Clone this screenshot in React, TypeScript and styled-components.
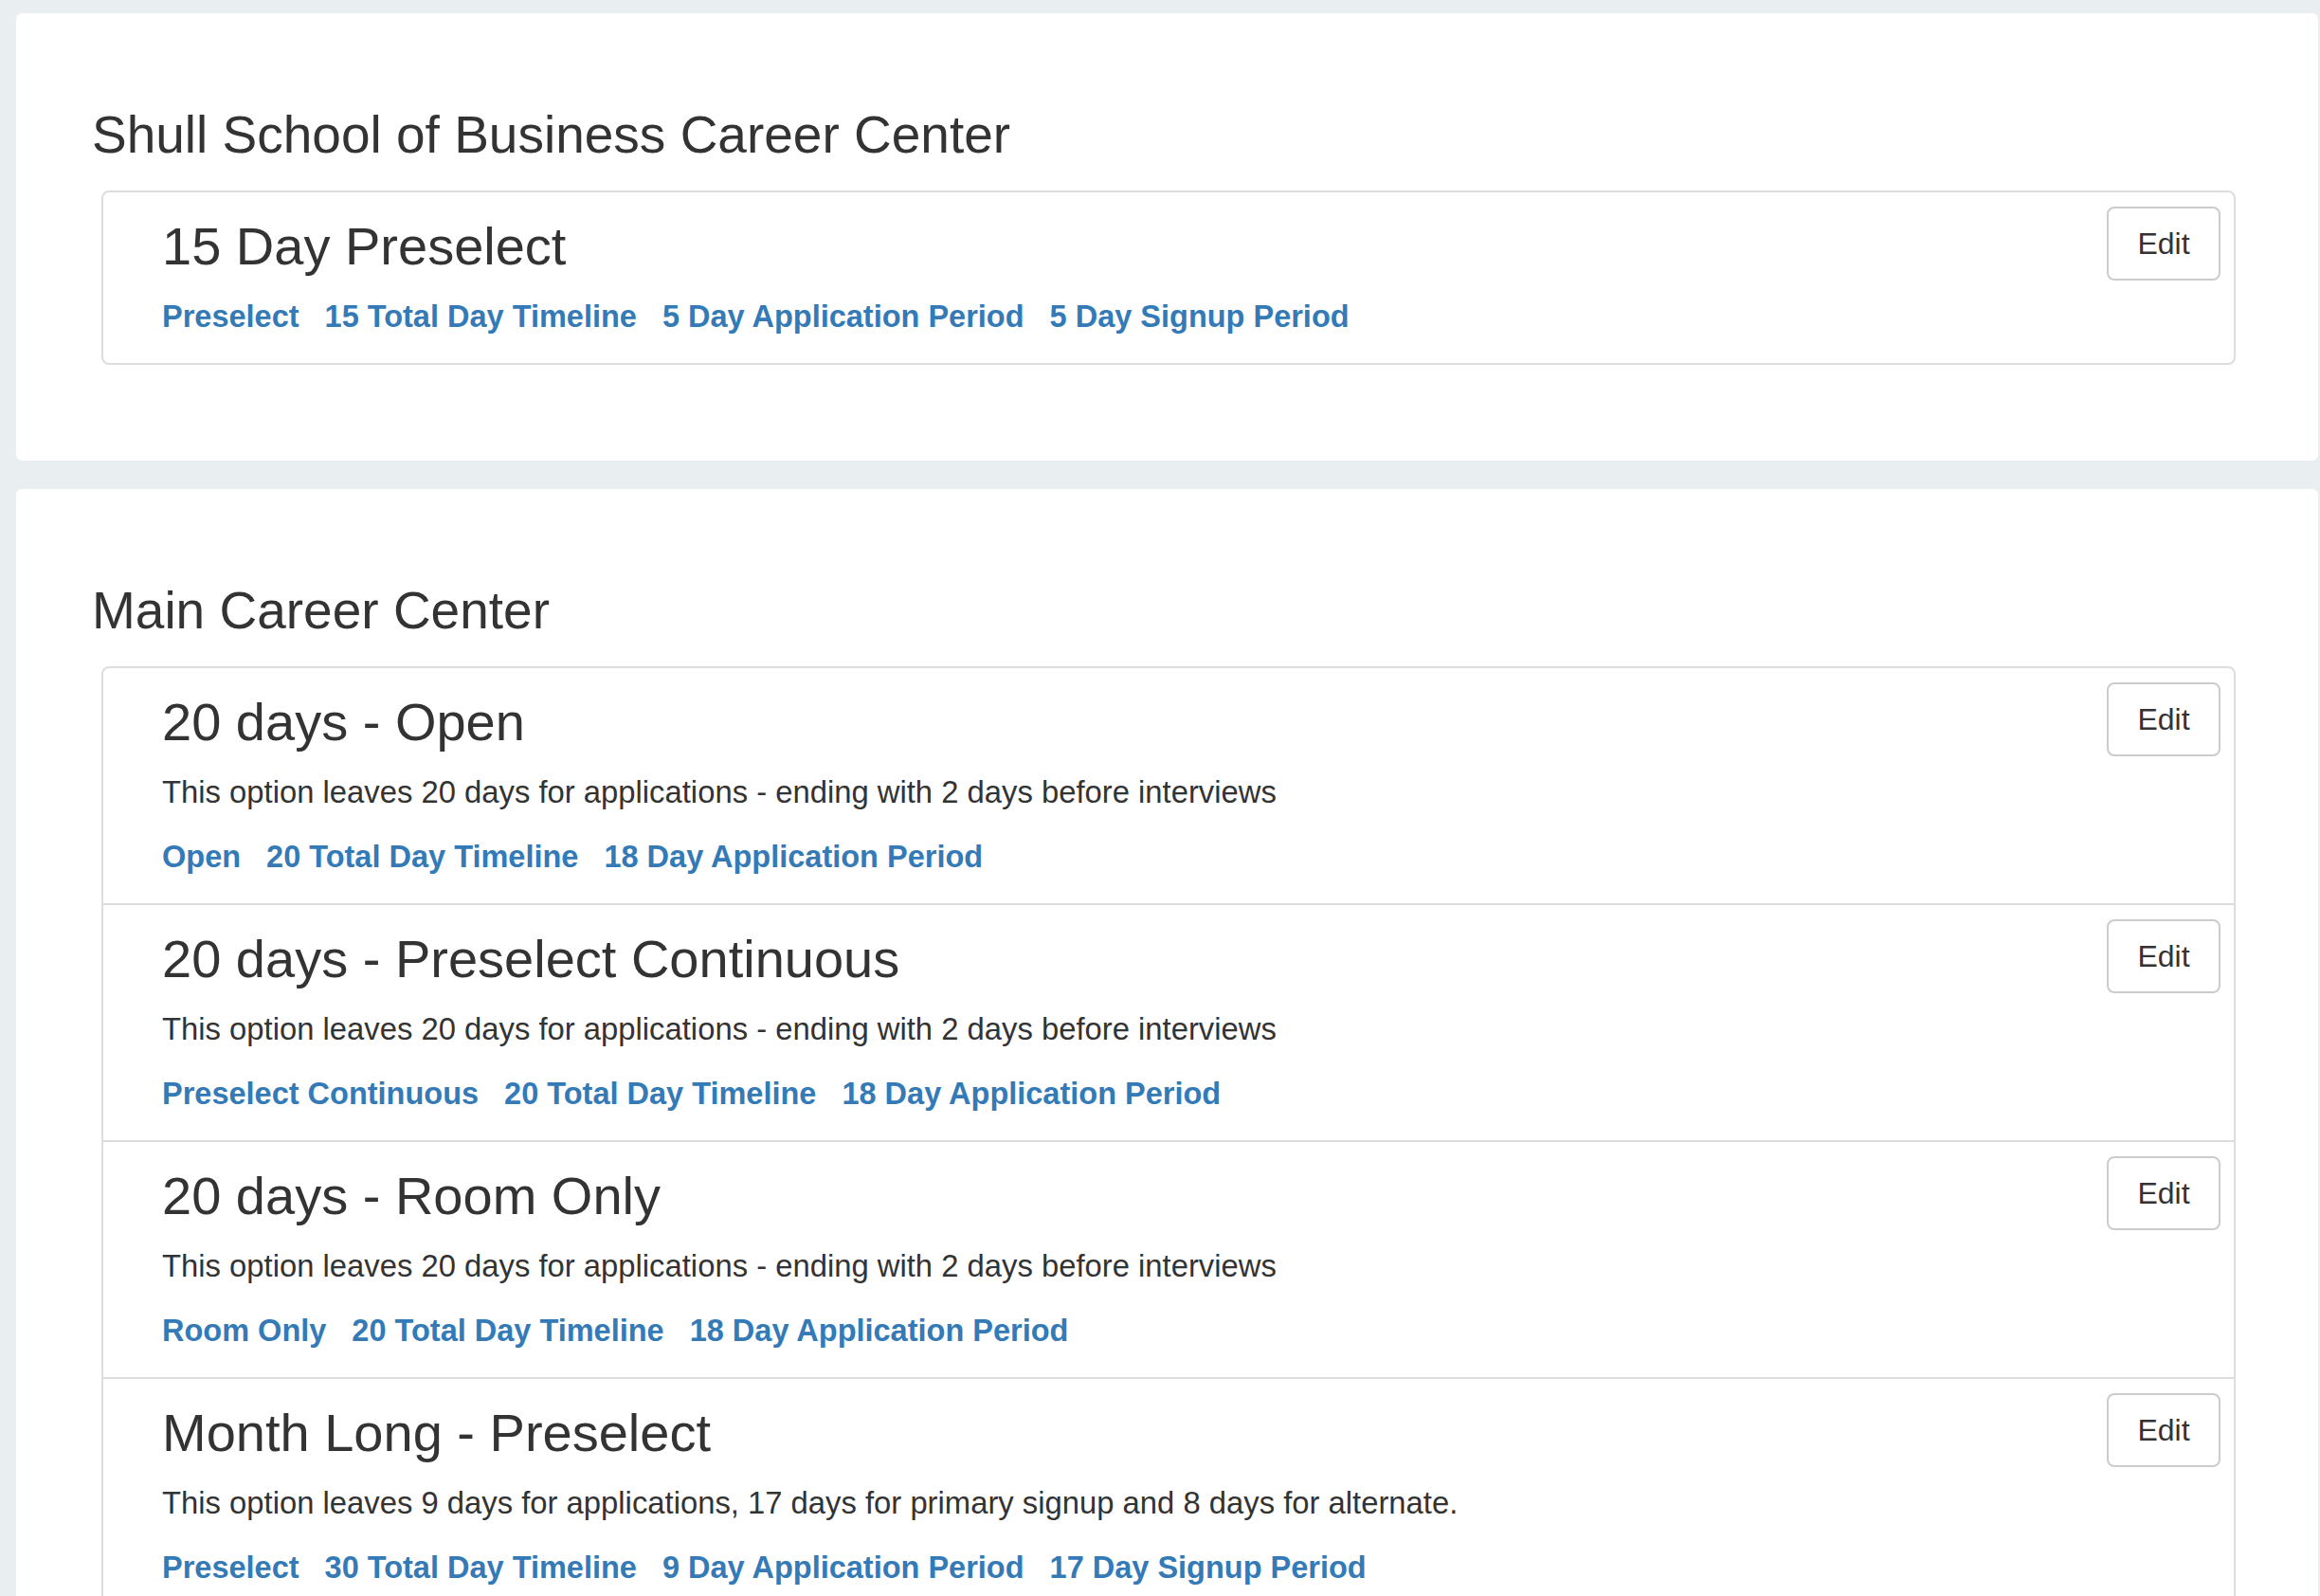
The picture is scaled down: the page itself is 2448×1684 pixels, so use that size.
import * as React from "react";
import styled, { createGlobalStyle } from "styled-components";

const GlobalStyle = createGlobalStyle`
  html, body {
    margin: 0;
    padding: 0;
    background: #e9eef1;
  }
  body {
    font-family: "Helvetica Neue", "Liberation Sans", Arial, sans-serif;
    color: #333;
    -webkit-font-smoothing: antialiased;
  }
`;

type Option = {
  name: string;
  description?: string;
  tags: string[];
};

type Center = {
  title: string;
  options: Option[];
};

const DESC_20 =
  "This option leaves 20 days for applications - ending with 2 days before interviews";

const centers: Center[] = [
  {
    title: "Shull School of Business Career Center",
    options: [
      {
        name: "15 Day Preselect",
        tags: [
          "Preselect",
          "15 Total Day Timeline",
          "5 Day Application Period",
          "5 Day Signup Period",
        ],
      },
    ],
  },
  {
    title: "Main Career Center",
    options: [
      {
        name: "20 days - Open",
        description: DESC_20,
        tags: ["Open", "20 Total Day Timeline", "18 Day Application Period"],
      },
      {
        name: "20 days - Preselect Continuous",
        description: DESC_20,
        tags: [
          "Preselect Continuous",
          "20 Total Day Timeline",
          "18 Day Application Period",
        ],
      },
      {
        name: "20 days - Room Only",
        description: DESC_20,
        tags: ["Room Only", "20 Total Day Timeline", "18 Day Application Period"],
      },
      {
        name: "Month Long - Preselect",
        description:
          "This option leaves 9 days for applications, 17 days for primary signup and 8 days for alternate.",
        tags: [
          "Preselect",
          "30 Total Day Timeline",
          "9 Day Application Period",
          "17 Day Signup Period",
        ],
      },
    ],
  },
];

const Page = styled.div`
  display: flex;
  flex-direction: column;
  gap: 30px;
  padding: 14px 2px 0 17px;
`;

const Card = styled.section`
  background: #fff;
  border-radius: 6px;
  padding: 97px 87px 101px 80px;
`;

const Heading = styled.h3`
  margin: 0 0 28px;
  font-size: 55px;
  line-height: 62px;
  font-weight: 300;
  color: #333;
`;

const ListGroup = styled.div`
  margin-left: 10px;
  border: 2px solid #ddd;
  border-radius: 8px;
  overflow: hidden;
`;

const Item = styled.div`
  display: flex;
  align-items: flex-start;
  padding: 15px 14px 29px 62px;
  & + & {
    border-top: 2px solid #ddd;
  }
`;

const Body = styled.div`
  flex: 1;
  min-width: 0;
  padding-top: 11px;
`;

const Title = styled.h4`
  margin: 0 0 23px;
  font-size: 56px;
  line-height: 62px;
  font-weight: 300;
  color: #333;
`;

const Description = styled.p`
  margin: 0 0 28px;
  font-size: 32.8px;
  line-height: 40px;
  color: #333;
`;

const Tags = styled.div`
  display: flex;
  flex-wrap: wrap;
  gap: 0 27px;
`;

const Tag = styled.a`
  font-size: 32.5px;
  line-height: 40px;
  font-weight: 700;
  color: #337ab7;
  text-decoration: none;
`;

const EditButton = styled.button`
  flex-shrink: 0;
  box-sizing: border-box;
  width: 120px;
  height: 78px;
  padding: 0;
  border: 2px solid #ccc;
  border-radius: 8px;
  background: #fff;
  font-family: inherit;
  font-size: 32px;
  color: #333;
  cursor: pointer;
`;

export default function App() {
  return (
    <>
      <GlobalStyle />
      <Page>
        {centers.map((center) => (
          <Card key={center.title}>
            <Heading>{center.title}</Heading>
            <ListGroup>
              {center.options.map((opt) => (
                <Item key={opt.name}>
                  <Body>
                    <Title>{opt.name}</Title>
                    {opt.description && (
                      <Description>{opt.description}</Description>
                    )}
                    <Tags>
                      {opt.tags.map((t) => (
                        <Tag key={t} href="#">
                          {t}
                        </Tag>
                      ))}
                    </Tags>
                  </Body>
                  <EditButton type="button">Edit</EditButton>
                </Item>
              ))}
            </ListGroup>
          </Card>
        ))}
      </Page>
    </>
  );
}
